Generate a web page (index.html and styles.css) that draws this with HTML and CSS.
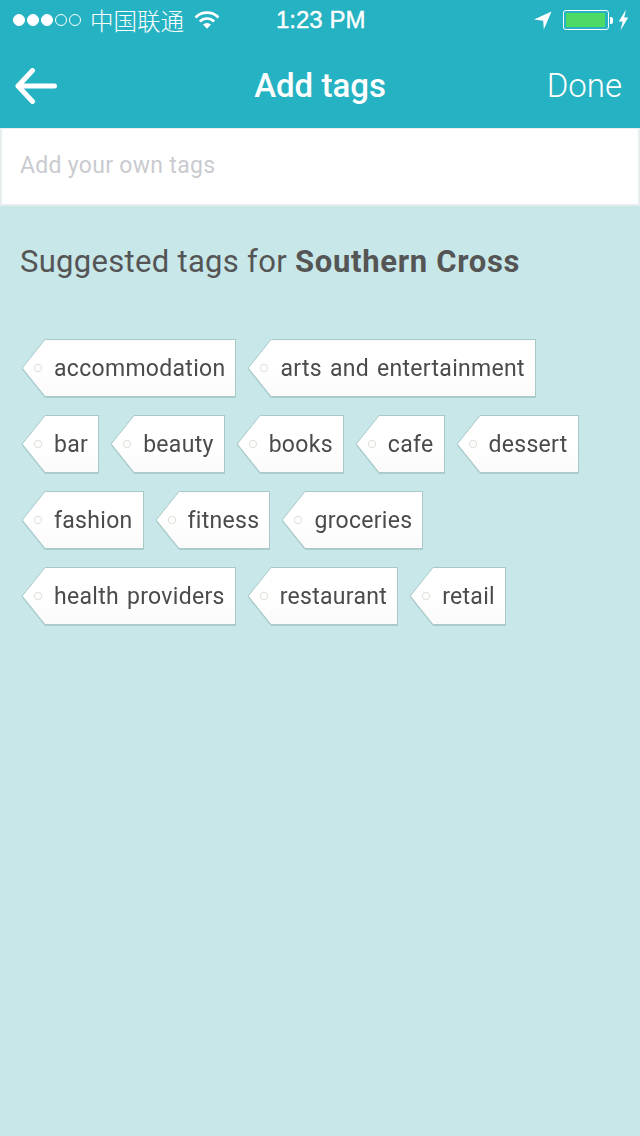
FILE: index.html
```html
<!DOCTYPE html>
<html lang="en">

<head>
  <meta charset="utf-8" />
  <title>Add tags</title>
  <link rel="stylesheet" href="styles.css">
</head>

<body>
  <svg class="defs" width="0" height="0">
    <symbol id="tag-end" viewBox="0 0 24 58">
      <polygon points="24,0.5 23,0.5 0.2,29 23,57.5 24,57.5" fill="url(#tag-fill)" stroke="#a9c9c9" stroke-width="1" />
      <circle cx="16" cy="29" r="3.7" fill="#fdfdfb" stroke="#dfe0da" stroke-width="1" />
    </symbol>
    <linearGradient id="tag-fill" x1="0" y1="0" x2="0" y2="1">
      <stop offset="0.5" stop-color="#ffffff" />
      <stop offset="1" stop-color="#fafafa" />
    </linearGradient>
  </svg>

  <header class="top">
    <div class="status">
      <div class="status-left">
        <span class="signal">
          <i class="dot on"></i><i class="dot on"></i><i class="dot on"></i><i class="dot"></i><i class="dot"></i>
        </span>
        <span class="carrier">中国联通</span>
        <svg class="wifi" width="26" height="20" viewBox="0 0 26 20">
          <path d="M1.5 7.5a16 16 0 0 1 23 0" fill="none" stroke="#fff" stroke-width="2.6" />
          <path d="M5.8 11.5a10 10 0 0 1 14.4 0" fill="none" stroke="#fff" stroke-width="2.6" />
          <path d="M9 14.6a5.6 5.6 0 0 1 8 0L13 18.8z" fill="#fff" />
        </svg>
      </div>
      <div class="clock">1:23 PM</div>
      <div class="status-right">
        <svg class="arrow" width="19" height="20" viewBox="0 0 19 20">
          <path d="M18.5 1.5L10.8 19.5L10.2 10.8L1 9.5z" fill="#fff" />
        </svg>
        <span class="battery"><span class="battery-level"></span></span>
        <span class="battery-tip"></span>
        <svg class="bolt" width="11" height="22" viewBox="0 0 11 22">
          <path d="M8 0.5L0.8 12.5H4.6L2.5 21.5L10.2 8.5H6.2z" fill="#fff" />
        </svg>
      </div>
    </div>
    <nav class="nav">
      <svg class="back" width="42" height="36" viewBox="0 0 42 36">
        <path d="M17.5 2.5L3 18L17.5 33.5M3 18H39.5" fill="none" stroke="#fff" stroke-width="5" stroke-linecap="round" stroke-linejoin="round" />
      </svg>
      <h1 class="title">Add tags</h1>
      <span class="done">Done</span>
    </nav>
  </header>

  <div class="own-tags">Add your own tags</div>

  <main class="content">
    <h2 class="suggested">Suggested tags for <b>Southern Cross</b></h2>
    <ul class="tags">
      <li class="tag"><svg class="tag-end" width="24" height="58"><use href="#tag-end" /></svg><span class="tag-name">accommodation</span></li>
      <li class="tag"><svg class="tag-end" width="24" height="58"><use href="#tag-end" /></svg><span class="tag-name">arts and entertainment</span></li>
      <li class="tag"><svg class="tag-end" width="24" height="58"><use href="#tag-end" /></svg><span class="tag-name">bar</span></li>
      <li class="tag"><svg class="tag-end" width="24" height="58"><use href="#tag-end" /></svg><span class="tag-name">beauty</span></li>
      <li class="tag"><svg class="tag-end" width="24" height="58"><use href="#tag-end" /></svg><span class="tag-name">books</span></li>
      <li class="tag"><svg class="tag-end" width="24" height="58"><use href="#tag-end" /></svg><span class="tag-name">cafe</span></li>
      <li class="tag"><svg class="tag-end" width="24" height="58"><use href="#tag-end" /></svg><span class="tag-name">dessert</span></li>
      <li class="tag"><svg class="tag-end" width="24" height="58"><use href="#tag-end" /></svg><span class="tag-name">fashion</span></li>
      <li class="tag"><svg class="tag-end" width="24" height="58"><use href="#tag-end" /></svg><span class="tag-name">fitness</span></li>
      <li class="tag"><svg class="tag-end" width="24" height="58"><use href="#tag-end" /></svg><span class="tag-name">groceries</span></li>
      <li class="tag"><svg class="tag-end" width="24" height="58"><use href="#tag-end" /></svg><span class="tag-name">health providers</span></li>
      <li class="tag"><svg class="tag-end" width="24" height="58"><use href="#tag-end" /></svg><span class="tag-name">restaurant</span></li>
      <li class="tag"><svg class="tag-end" width="24" height="58"><use href="#tag-end" /></svg><span class="tag-name">retail</span></li>
    </ul>
  </main>
</body>

</html>
```

FILE: styles.css
```css
* {
  box-sizing: border-box;
}

body {
  font-family: Roboto, "Noto Sans CJK SC", sans-serif;
  margin: 0;
  height: 1136px;
  overflow: hidden;
  background: #c8e7e9;
  display: flex;
  flex-direction: column;
}

.defs {
  position: absolute;
}

.top {
  height: 128px;
  background: #25b2c2;
  color: #fff;
}

.status {
  height: 40px;
  padding: 0 11px 0 13px;
  display: flex;
  align-items: center;
  justify-content: space-between;
  position: relative;
}

.status-left {
  display: flex;
  align-items: center;
}

.signal {
  display: flex;
  gap: 2px;
}

.dot {
  width: 12px;
  height: 12px;
  border: 1px solid #fff;
  border-radius: 50%;
}

.dot.on {
  background: #fff;
}

.carrier {
  font-family: "Noto Sans CJK SC", sans-serif;
  font-size: 23.5px;
  font-weight: 300;
  margin-left: 9px;
}

.wifi {
  margin-left: 10px;
}

.clock {
  position: absolute;
  left: 276px;
  top: 6px;
  font-family: "Liberation Sans", sans-serif;
  font-size: 24px;
  line-height: 28px;
  -webkit-text-stroke: 0.4px #fff;
}

.status-right {
  display: flex;
  align-items: center;
}

.battery {
  width: 46px;
  height: 20px;
  margin-left: 11px;
  padding: 2px;
  border: 1px solid #fff;
  border-radius: 3px;
}

.battery-level {
  display: block;
  width: 39px;
  height: 100%;
  background: #4cd964;
}

.battery-tip {
  width: 3px;
  height: 7px;
  margin-left: 1px;
  background: #fff;
  border-radius: 0 2px 2px 0;
}

.bolt {
  margin-left: 5px;
}

.nav {
  height: 88px;
  padding: 2px 18px 0 15px;
  display: flex;
  align-items: center;
  justify-content: space-between;
  position: relative;
}

.back {
  margin-top: 2px;
}

.title {
  position: absolute;
  left: 0;
  right: 0;
  margin: 0;
  text-align: center;
  font-size: 33px;
  font-weight: 500;
}

.done {
  font-size: 33px;
  font-weight: 300;
}

.own-tags {
  height: 78px;
  padding: 0 18px 2px;
  display: flex;
  align-items: center;
  background: #fff;
  border: 2px solid #e8edef;
  border-width: 1px 2px 2px;
  color: #cacbd0;
  font-size: 23px;
  letter-spacing: 0.3px;
}

.content {
  padding: 0 20px 0 22px;
}

.suggested {
  margin: 35px 0 0 -2px;
  font-size: 31px;
  line-height: 42px;
  font-weight: 400;
  letter-spacing: 0.3px;
  color: #555;
}

.suggested b {
  font-weight: 700;
  letter-spacing: 0.7px;
}

.tags {
  list-style: none;
  margin: 56px 0 0;
  padding: 0;
  display: flex;
  flex-wrap: wrap;
  gap: 18px 12px;
}

.tag {
  display: flex;
  height: 58px;
  filter: drop-shadow(0 1px 0 rgba(120, 160, 160, 0.35));
}

.tag-end {
  display: block;
}

.tag-name {
  padding: 0 10px 0 9px;
  margin-left: -1px;
  line-height: 57px;
  font-size: 23px;
  letter-spacing: 0.3px;
  word-spacing: 2px;
  color: #4b4b4b;
  background: linear-gradient(#fff 50%, #fafafa);
  border: 1px solid #a9c9c9;
  border-left: 0;
}
```
